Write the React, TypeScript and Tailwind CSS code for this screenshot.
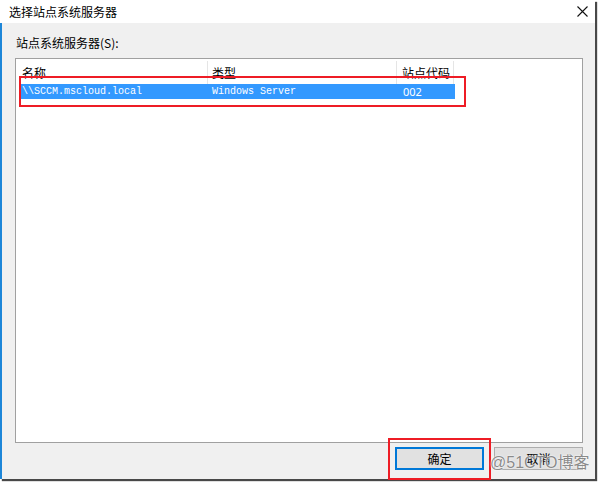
const cjk = { fontFamily: '"Noto Sans CJK SC", "Microsoft YaHei", sans-serif' };
const mono = { fontFamily: '"Liberation Mono", "DejaVu Sans Mono", monospace' };

function CloseIcon() {
  return (
    <svg width="11" height="11" viewBox="0 0 11 11" className="block">
      <path d="M0.5 0.5 L10.5 10.5 M10.5 0.5 L0.5 10.5" stroke="#111" strokeWidth="1.1" fill="none" />
    </svg>
  );
}

function ListHeader() {
  return (
    <div className="flex h-[25px] items-center text-[12px] text-black bg-white pt-[2px]" style={cjk}>
      <div className="w-[192px] h-full flex items-center pl-[6px] border-r border-[#e5e5e5]">名称</div>
      <div className="w-[189px] h-full flex items-center pl-[4px] border-r border-[#e5e5e5]">类型</div>
      <div className="w-[57px] h-full flex items-center pl-[5px] border-r border-[#e5e5e5]">站点代码</div>
      <div className="flex-1" />
    </div>
  );
}

function SelectedRow() {
  return (
    <div className="flex h-[15px] ml-[5px] w-[434px] bg-[#3399ff] text-white items-center text-[10px] leading-none">
      <div className="w-[187px] pl-[1px]" style={mono}>\\SCCM.mscloud.local</div>
      <div className="w-[190px] pl-[4px]" style={mono}>Windows Server</div>
      <div className="flex-1 pl-[5px] text-[11px]" style={{ fontFamily: '"Noto Sans", sans-serif' }}>002</div>
    </div>
  );
}

export default function App() {
  return (
    <div className="relative w-[600px] h-[484px] bg-white overflow-hidden">
      <div className="w-[595px] h-[479px] flex flex-col shadow-[2px_2px_1px_rgba(40,40,40,0.85)]">
        <div className="h-[23px] bg-white flex items-center justify-between pl-[9px] pr-[7px]">
          <span className="text-[12px] text-black" style={cjk}>选择站点系统服务器</span>
          <CloseIcon />
        </div>
        <div className="flex-1 bg-[#f0f0f0] border-l-2 border-[#1d86d8] flex flex-col pl-[13px] pr-[12px] pt-[11px] pb-[8px]">
          <div className="text-[12px] leading-[17px] text-black pl-[1px]" style={cjk}>站点系统服务器(S):</div>
          <div className="mt-[7px] h-[385px] bg-white border border-[#a0a0a0] flex flex-col">
            <ListHeader />
            <SelectedRow />
          </div>
          <div className="mt-[4px] flex justify-end gap-[10px]">
            <button className="w-[89px] h-[23px] bg-[#e1e1e1] border-2 border-[#0078d7] text-[12px] text-black" style={cjk}>确定</button>
            <button className="w-[89px] h-[23px] bg-[#e1e1e1] border border-[#adadad] text-[12px] text-black" style={cjk}>取消</button>
          </div>
        </div>
      </div>

      <div className="absolute left-[19px] top-[76px] w-[447px] h-[31px] border-2 border-[#ee1c25]" />
      <div className="absolute left-[388px] top-[438px] w-[103px] h-[42px] border-2 border-[#ee1c25]" />
      <div
        className="absolute left-[490px] top-[453px] text-[16px] leading-[20px] text-[#8a8a8a]"
        style={{ fontFamily: '"Liberation Sans", "Noto Sans CJK SC", sans-serif', textShadow: '0 0 2px #fff, 0 0 1px #fff' }}
      >
        @51CTO博客
      </div>
    </div>
  );
}
